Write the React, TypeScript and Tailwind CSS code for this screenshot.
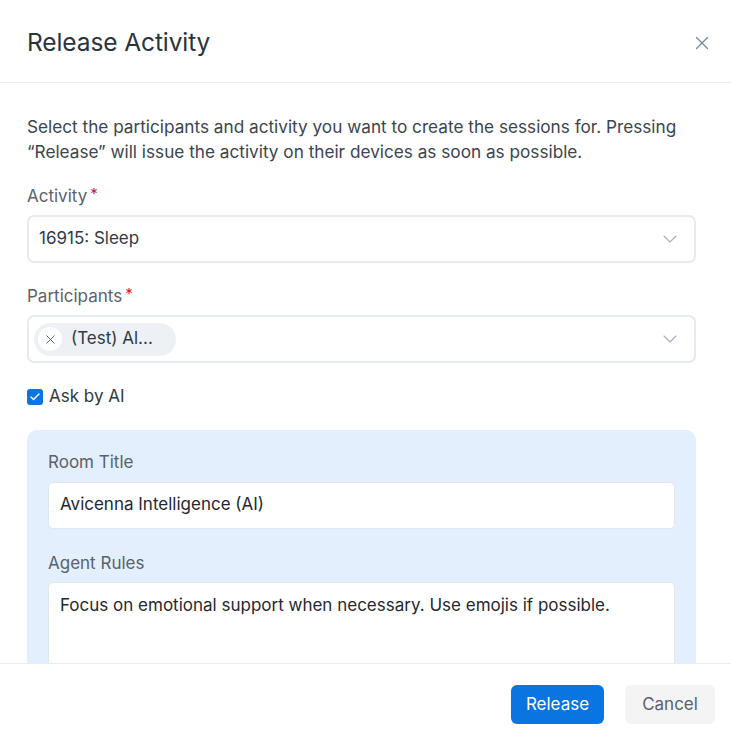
import { X, ChevronDown, Check } from 'lucide-react';

function Label({ text, required }: { text: string; required?: boolean }) {
  return (
    <div className="flex items-start text-[17px] leading-6 text-[#5a626b]">
      <span>{text}</span>
      {required && <span className="ml-[3px] text-[#c8174f] text-[15px] leading-5">*</span>}
    </div>
  );
}

export default function App() {
  return (
    <div className="w-[731px] h-[737px] bg-white flex flex-col overflow-hidden" style={{ fontFamily: 'Inter, "Noto Sans", sans-serif' }}>
      <div className="h-[83px] shrink-0 flex items-center justify-between pl-[27px] pr-[18px] pt-[3px] border-b border-[#e6edf3]">
        <h1 className="text-[24.5px] text-[#2a343d] font-normal tracking-[-0.1px]">Release Activity</h1>
        <X className="w-[22px] h-[22px] text-[#6e8aa0]" strokeWidth={1.4} />
      </div>

      <div className="flex-1 overflow-hidden pl-[27px] pr-[35px] pt-[31px]">
        <p className="text-[17.2px] leading-[25px] text-[#3b454f]">
          Select the participants and activity you want to create the sessions for. Pressing “Release” will issue the activity on their devices as soon as possible.
        </p>

        <div className="mt-[20px]">
          <Label text="Activity" required />
          <div className="mt-[7px] h-[48px] border-2 border-[#e6ebf0] rounded-[7px] flex items-center justify-between pl-[10px] pr-[12px]">
            <span className="text-[17px] text-[#2f3a44]">16915: Sleep</span>
            <ChevronDown className="w-[24px] h-[24px] text-[#a3b1bd]" strokeWidth={1.1} />
          </div>
        </div>

        <div className="mt-[21px]">
          <Label text="Participants" required />
          <div className="mt-[7px] h-[48px] border-2 border-[#e6ebf0] rounded-[7px] flex items-center justify-between pl-[5px] pr-[12px]">
            <div className="h-[33px] w-[142px] bg-[#edf1f5] rounded-full flex items-center pl-[4px] gap-[9px]">
              <div className="w-[24px] h-[24px] rounded-full bg-white flex items-center justify-center">
                <X className="w-[15px] h-[15px] text-[#555d66]" strokeWidth={1.5} />
              </div>
              <span className="text-[17px] text-[#2f3a44]">(Test) Al...</span>
            </div>
            <ChevronDown className="w-[24px] h-[24px] text-[#a3b1bd]" strokeWidth={1.1} />
          </div>
        </div>

        <div className="mt-[21px] flex items-center gap-[6px]">
          <div className="w-[16px] h-[16px] rounded-[3px] bg-[#0b74de] flex items-center justify-center">
            <Check className="w-[12px] h-[12px] text-white" strokeWidth={3} />
          </div>
          <span className="text-[17px] text-[#2f3a44]">Ask by AI</span>
        </div>

        <div className="mt-[20px] bg-[#e3effd] rounded-[10px] px-[21px] pt-[20px] pb-[20px]">
          <Label text="Room Title" />
          <div className="mt-[8px] h-[47px] bg-white border border-[#dfe7ef] rounded-[5px] flex items-center px-[11px]">
            <span className="text-[17px] text-[#1f2830]">Avicenna Intelligence (AI)</span>
          </div>
          <div className="mt-[22px]">
            <Label text="Agent Rules" />
          </div>
          <div className="mt-[7px] h-[120px] bg-white border border-[#dfe7ef] rounded-[5px] px-[11px] pt-[10px]">
            <span className="text-[17px] text-[#1f2830]">Focus on emotional support when necessary. Use emojis if possible.</span>
          </div>
        </div>
      </div>

      <div className="h-[74px] shrink-0 border-t border-[#e6edf3] flex items-start justify-end gap-[21px] pr-[16px] pt-[21px]">
        <button className="w-[93px] h-[39px] rounded-[6px] bg-[#0a74e0] text-white text-[17px]">Release</button>
        <button className="w-[90px] h-[39px] rounded-[6px] bg-[#f4f4f5] text-[#5a626b] text-[17px]">Cancel</button>
      </div>
    </div>
  );
}
